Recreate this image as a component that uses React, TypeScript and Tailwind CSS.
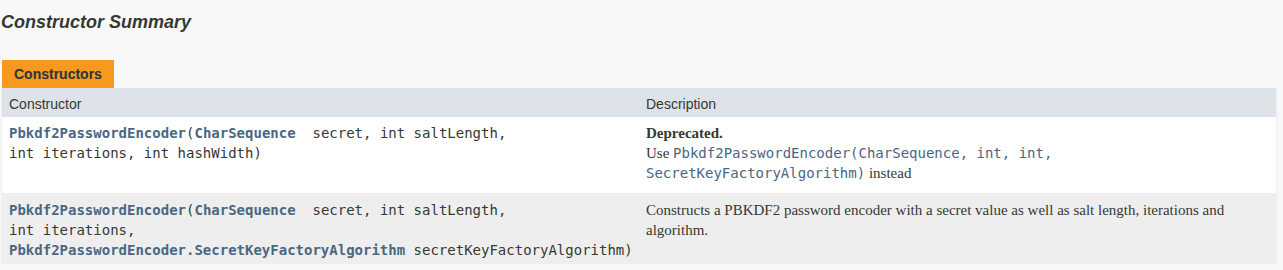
const sans = "font-['Liberation_Sans',Arial,sans-serif]";
const mono = "font-['DejaVu_Sans_Mono',monospace]";
const serif = "font-['Liberation_Serif',Georgia,serif]";

function Link({ children, bold = true }: { children: React.ReactNode; bold?: boolean }) {
    return <span className={`text-[#4a6782] ${bold ? 'font-bold' : ''}`}>{children}</span>;
}

export default function App() {
    return (
        <div className={`min-h-screen bg-[#f8f8f8] pl-px pr-[6px] text-[#353833] ${sans}`}>
            <h3 className="pt-[10px] text-[18px] leading-[24px] font-bold italic">
                Constructor Summary
            </h3>

            <div className="mt-[26px] pl-px">
                <span className="inline-block h-[28px] bg-[#f8981d] px-[12px] text-[14px] leading-[28px] font-bold text-[#253441]">
                    Constructors
                </span>
            </div>

            <div className="grid grid-cols-[637px_1fr] border border-t-0 border-[#eeeeee]">
                <div className="bg-[#dee3e9] pt-[8px] pb-[4px] pl-[7px] text-[14px] leading-[17px]">
                    Constructor
                </div>
                <div className="bg-[#dee3e9] pt-[8px] pb-[4px] pl-[7px] text-[14px] leading-[17px]">
                    Description
                </div>

                <div className={`bg-white pt-[6px] pb-[10px] pl-[7px] text-[14px] leading-[20px] whitespace-pre ${mono}`}>
                    <Link>Pbkdf2PasswordEncoder</Link>(<Link>CharSequence</Link>{'  secret, int saltLength,'}
                    <br />
                    int iterations, int hashWidth)
                </div>
                <div className={`bg-white pt-[6px] pb-[10px] pl-[7px] pr-[3px] text-[15px] leading-[20px] ${serif}`}>
                    <div className="font-bold text-[15px]">Deprecated.</div>
                    <div>
                        Use{' '}
                        <span className={`text-[14px] ${mono}`}>
                            <Link bold={false}>Pbkdf2PasswordEncoder(CharSequence, int, int,</Link>
                            <br />
                            <Link bold={false}>SecretKeyFactoryAlgorithm)</Link>
                        </span>{' '}
                        instead
                    </div>
                </div>

                <div className={`bg-[#eeeeee] pt-[7px] pb-[3px] pl-[7px] text-[14px] leading-[20px] whitespace-pre ${mono}`}>
                    <Link>Pbkdf2PasswordEncoder</Link>(<Link>CharSequence</Link>{'  secret, int saltLength,'}
                    <br />
                    int iterations,
                    <br />
                    <Link>Pbkdf2PasswordEncoder.SecretKeyFactoryAlgorithm</Link> secretKeyFactoryAlgorithm)
                </div>
                <div className={`bg-[#eeeeee] pt-[7px] pb-[3px] pl-[7px] pr-[10px] text-[15px] leading-[20px] ${serif}`}>
                    Constructs a PBKDF2 password encoder with a secret value as well as salt length, iterations and
                    algorithm.
                </div>
            </div>
        </div>
    );
}
